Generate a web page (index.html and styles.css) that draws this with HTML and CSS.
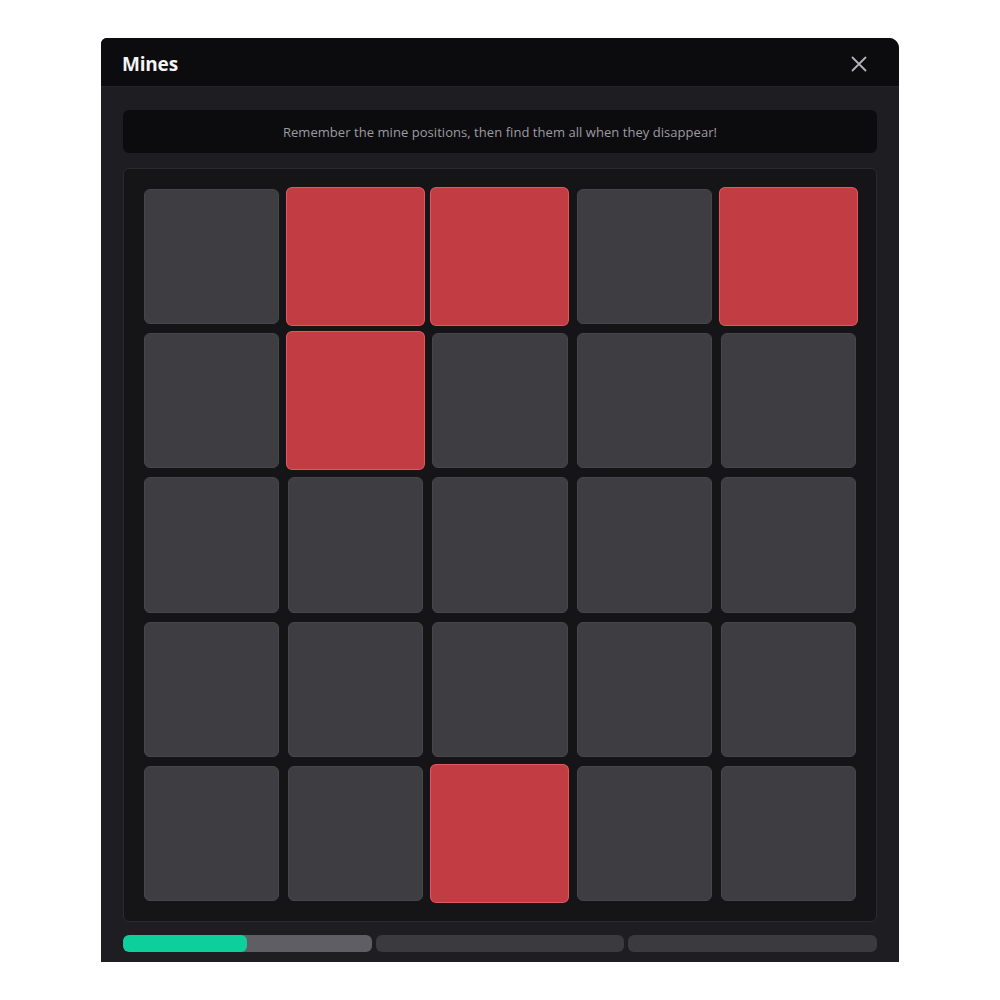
FILE: index.html
```html
<!DOCTYPE html>
<html lang="en">
<head>
  <meta charset="UTF-8">
  <meta name="viewport" content="width=device-width, initial-scale=1.0">
  <title>Mines</title>
  <link rel="stylesheet" href="styles.css">
</head>
<body>
  <div class="window">
    <div class="window-header">
      <h1 class="window-title">Mines</h1>
      <button class="close-btn" aria-label="Close">
        <svg width="16" height="16" viewBox="0 0 16 16">
          <path d="M1.5 1.5 L14.5 14.5 M14.5 1.5 L1.5 14.5" stroke="currentColor" stroke-width="1.8" stroke-linecap="round"/>
        </svg>
      </button>
    </div>
    <div class="window-body">
      <div class="message">Remember the mine positions, then find them all when they disappear!</div>
      <div class="board" id="board"></div>
      <div class="progress">
        <div class="progress-seg"><div class="progress-fill" style="width: 50%"></div></div>
        <div class="progress-seg idle"></div>
        <div class="progress-seg idle"></div>
      </div>
    </div>
  </div>

  <script>
    // Mine positions shown during the memorise phase
    const mines = [1, 2, 4, 6, 22];
    const board = document.getElementById('board');
    for (let i = 0; i < 25; i++) {
      const cell = document.createElement('div');
      cell.className = mines.includes(i) ? 'cell mine' : 'cell';
      board.appendChild(cell);
    }
  </script>
</body>
</html>
```

FILE: styles.css
```css
body {
  margin: 0;
  background-color: #ffffff;
  font-family: "Open Sans", "Noto Sans", sans-serif;
}
.window {
  width: 798px;
  margin: 38px 0 0 101px;
  background-color: #1e1d21;
  border-radius: 6px 10px 0 0;
  overflow: hidden;
}
.window-header {
  height: 49px;
  background-color: #0c0b0e;
  border-bottom: 1px solid #252428;
  box-sizing: border-box;
  display: flex;
  align-items: center;
  justify-content: space-between;
  padding: 3px 32px 0 21px;
}
.window-title {
  margin: 0;
  font-size: 19px;
  font-weight: 700;
  color: #f4f4f6;
  letter-spacing: -0.2px;
}
.close-btn {
  background: none;
  border: none;
  padding: 0;
  color: #b4b3b8;
  display: flex;
}
.window-body {
  padding: 23px 22px 10px 22px;
}
.message {
  height: 43px;
  background-color: #0c0b0e;
  border-radius: 6px;
  display: flex;
  align-items: center;
  justify-content: center;
  font-size: 13px;
  letter-spacing: 0.05px;
  color: #9d9ca2;
}
.board {
  margin-top: 15px;
  height: 754px;
  box-sizing: border-box;
  background-color: #151417;
  border: 1px solid #2b2a2e;
  border-radius: 6px;
  padding: 20px;
  display: grid;
  grid-template-columns: repeat(5, 1fr);
  grid-template-rows: repeat(5, 1fr);
  gap: 9px;
}
.cell {
  background-color: #3e3d41;
  border: 1px solid #47464a;
  border-radius: 6px;
}
.cell.mine {
  background-color: #c13c43;
  border-color: #e2585e;
  transform: scale(1.03);
}
.progress {
  margin-top: 13px;
  display: flex;
  gap: 4px;
}
.progress-seg {
  flex: 1;
  height: 17px;
  border-radius: 6px;
  background-color: #5f5e64;
  overflow: hidden;
}
.progress-seg.idle {
  background-color: #3b3a3e;
}
.progress-fill {
  height: 100%;
  background-color: #0ccf9b;
  border-radius: 6px;
}
```
